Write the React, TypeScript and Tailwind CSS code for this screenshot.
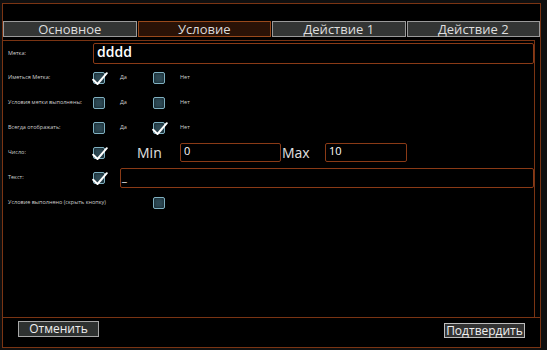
const tabs = [
  { name: 'Основное', active: false },
  { name: 'Условие', active: true },
  { name: 'Действие 1', active: false },
  { name: 'Действие 2', active: false },
];

function Check({ checked }: { checked?: boolean }) {
  return (
    <div className="relative w-[12px] h-[12px] shrink-0 rounded-[2px] border border-[#7fb0c0] bg-[#2d4853] shadow-[inset_0_0_3px_#0c1a20]">
      {checked && (
        <svg className="absolute -left-[2px] -top-[2px] w-[16px] h-[16px]" viewBox="0 0 16 16">
          <path d="M1.2 8.8 L5.5 13 L14.8 2.2" fill="none" stroke="#ffffff" strokeWidth="2" strokeLinecap="round" strokeLinejoin="round" />
        </svg>
      )}
    </div>
  );
}

function Label({ children }: { children: React.ReactNode }) {
  return <div className="w-[85px] shrink-0 text-[5.5px] text-[#cfcfcf] whitespace-nowrap">{children}</div>;
}

function YesNo({ label, yes, no }: { label: string; yes?: boolean; no?: boolean }) {
  return (
    <div className="h-[25px] flex items-center">
      <Label>{label}</Label>
      <Check checked={yes} />
      <span className="ml-[15px] w-[33px] text-[5.5px] text-[#cfcfcf]">Да</span>
      <Check checked={no} />
      <span className="ml-[15px] text-[5.5px] text-[#cfcfcf]">Нет</span>
    </div>
  );
}

export default function App() {
  return (
    <div
      className="w-[547px] h-[350px] bg-[#0f0f0f] pl-[2px] pt-[3px] overflow-hidden"
      style={{ fontFamily: '"Open Sans", "Noto Sans", sans-serif' }}
    >
      <div className="w-[539px] h-[345px] border border-[#7a3413] bg-black flex flex-col">
        <div className="h-[17px]" />
        <div className="grid grid-cols-4 gap-[1px] h-[16px]">
          {tabs.map((t) => (
            <div
              key={t.name}
              className={`flex items-center justify-center text-[13px] leading-none ${t.active
                ? 'bg-[#2a1206] border border-[#9a4a1c] text-[#dcdcdc]'
                : 'bg-[#333534] border border-[#9a9a9a] text-[#dedede]'
                }`}
            >
              {t.name}
            </div>
          ))}
        </div>
        <div className="h-[3px]" />
        <div className="h-[277px] mr-[5px] border-t border-r border-[#7a3413] pl-[5px] flex flex-col">
          <div className="h-[24px] flex items-center">
            <Label>Метка:</Label>
            <div className="flex-1 h-[21px] border border-[#8a3a16] rounded-[2px] px-[3px] text-[14px] font-semibold text-white leading-[16px]">
              dddd
            </div>
          </div>
          <YesNo label="Иметься Метка:" yes />
          <YesNo label="Условия метки выполнены:" />
          <YesNo label="Всегда отображать:" no />
          <div className="h-[25px] flex items-center">
            <Label>Число:</Label>
            <Check checked />
            <span className="ml-[32px] w-[43px] text-[14px] text-[#e0e0e0]">Min</span>
            <div className="w-[101px] h-[19px] border border-[#8a3a16] rounded-[2px] px-[3px] text-[11px] text-white leading-[13px]">0</div>
            <span className="ml-[1px] w-[43px] text-[14px] text-[#e0e0e0]">Max</span>
            <div className="w-[82px] h-[19px] border border-[#8a3a16] rounded-[2px] px-[3px] text-[11px] text-white leading-[13px]">10</div>
          </div>
          <div className="h-[25px] flex items-center">
            <Label>Текст:</Label>
            <Check checked />
            <div className="ml-[15px] flex-1 h-[20px] border border-[#8a3a16] rounded-[2px] px-[1px] text-[11px] text-white leading-[16px]">_</div>
          </div>
          <div className="h-[25px] flex items-center">
            <div className="w-[145px] shrink-0 text-[5.5px] text-[#cfcfcf] whitespace-nowrap">Условие выполнено (скрыть кнопку)</div>
            <Check />
          </div>
        </div>
        <div className="border-t border-[#7a3413] flex-1 flex items-start justify-between pt-[3px] pl-[15px] pr-[15px]">
          <button className="w-[81px] h-[16px] bg-[#2e3130] border border-[#a8a8a8] text-[12px] leading-none text-[#eeeeee]">
            Отменить
          </button>
          <button className="mt-[2px] w-[81px] h-[15px] bg-[#333333] border border-[#bdbdbd] text-[12px] leading-none text-[#f0f0f0]">
            Подтвердить
          </button>
        </div>
      </div>
    </div>
  );
}
